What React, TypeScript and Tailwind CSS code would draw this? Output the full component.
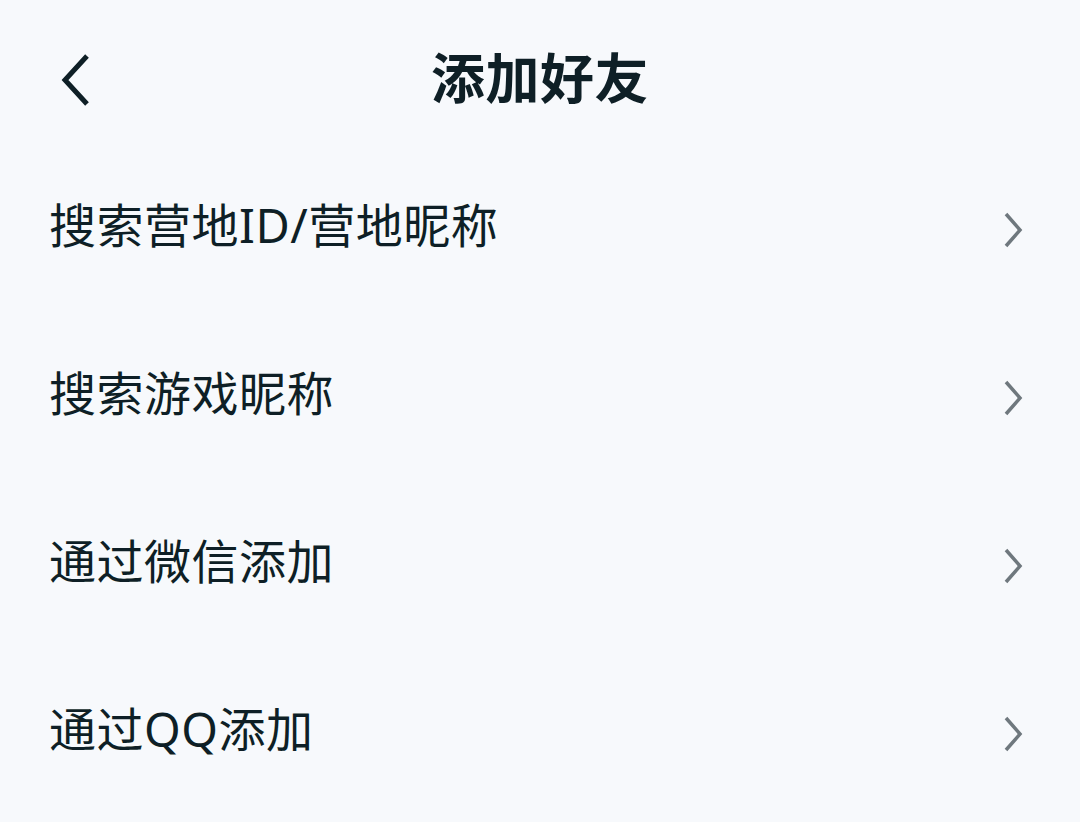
import React from "react";

const items = ["搜索营地ID/营地昵称", "搜索游戏昵称", "通过微信添加", "通过QQ添加"];

export default function App() {
  return (
    <div
      className="w-[1080px] h-[822px] bg-[#f7f9fc] overflow-hidden text-[#0e1f26]"
      style={{ fontFamily: '"Noto Sans", "Noto Sans CJK SC", sans-serif' }}
    >
      <div className="relative h-[146px] pt-[10px] flex items-center justify-center">
        <div className="absolute left-[58px] top-[52px] w-[36px] h-[56px]">
          <svg width="36" height="56" viewBox="0 0 36 56" fill="none">
            <path d="M29 4 L7 28 L29 52" stroke="#0e1f26" strokeWidth="5" strokeLinecap="butt" strokeLinejoin="miter" />
          </svg>
        </div>
        <div className="text-[54px] font-bold leading-none tracking-[0.5px]">添加好友</div>
      </div>
      <div className="flex flex-col">
        {items.map((t) => (
          <div key={t} className="h-[168px] flex items-center justify-between pl-[49px] pr-[56px]">
            <span className="text-[47px] leading-none tracking-[0.5px] mb-[10px]">{t}</span>
            <svg width="22" height="36" viewBox="0 0 22 36" fill="none">
              <path d="M4 2 L18 18 L4 34" stroke="#6f787e" strokeWidth="3.5" />
            </svg>
          </div>
        ))}
      </div>
    </div>
  );
}
